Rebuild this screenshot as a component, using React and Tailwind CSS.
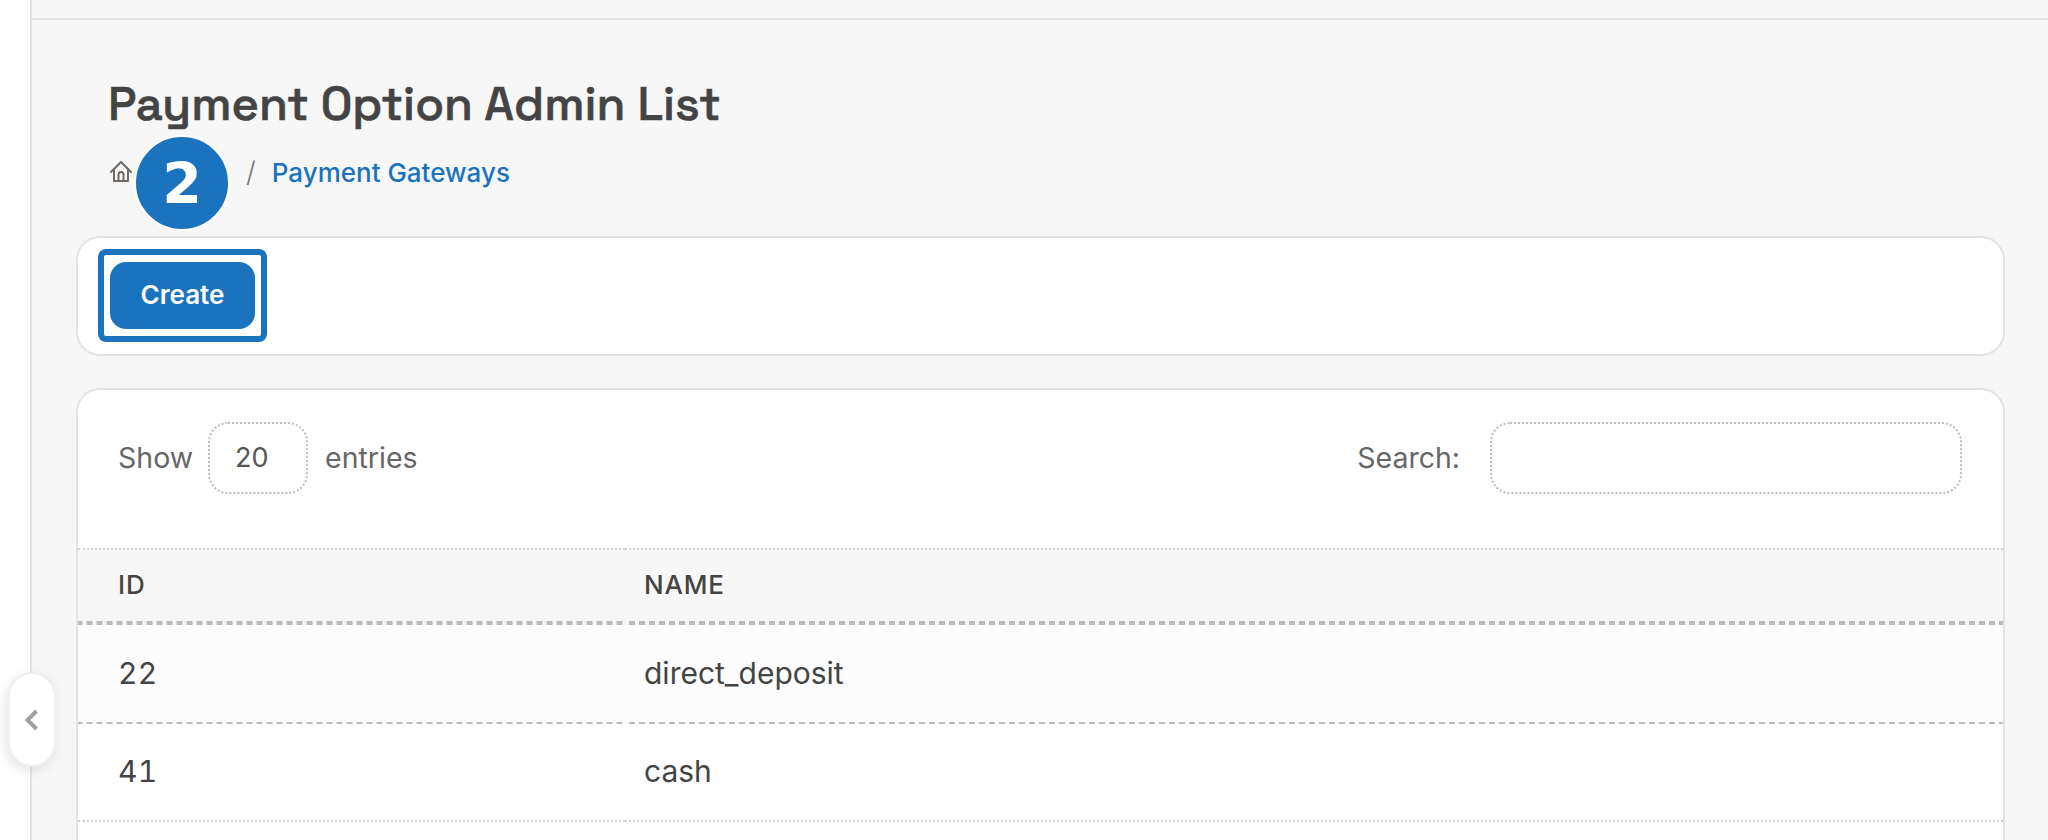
import { ChevronLeft } from "lucide-react";

const dashes = "bg-[linear-gradient(to_right,#bbbbbb_6px,transparent_6px)] bg-bottom bg-repeat-x";

const rows = [
  { id: 22, name: "direct_deposit", bg: "bg-[#fcfcfc]", h: "h-[99px]", line: `${dashes} bg-[length:10px_2px]` },
  { id: 41, name: "cash", bg: "bg-white", h: "h-[98px]", line: "border-b-2 border-dotted border-[#d0d0d0]" },
];

function HomeIcon() {
  return (
    <svg viewBox="0 0 24 24" className="ml-[1px] w-[24px] h-[24px] text-[#6f6a66]" fill="none" stroke="currentColor" strokeWidth="2" strokeLinejoin="round" strokeLinecap="round">
      <path d="M2 12 12 2l10 10" />
      <path d="M5 10v11h14V10" />
      <path d="M9.5 21v-6.5a2.5 2.5 0 0 1 5 0V21" />
    </svg>
  );
}

export default function App() {
  return (
    <div className="relative flex h-[840px] overflow-hidden bg-white font-['Inter',sans-serif] text-[#444]">
      <div className="w-[30px] shrink-0 border-r-2 border-[#e2e2e2] box-content" />

      <main className="flex-1 bg-[#f7f7f7]">
        <div className="h-[20px] border-b-2 border-[#e2e2e2]" />

        <div className="pl-[44px] pr-[43px]">
          <div className="pl-[32px] pt-[54px]">
            <h1 className="font-['Space_Grotesk','DejaVu_Sans',sans-serif] text-[47px] leading-[60px] font-medium text-[#444] [-webkit-text-stroke:0.7px_#444]">
              Payment Option Admin List
            </h1>
            <div className="relative mt-[22px] flex items-center h-[32px]">
              <HomeIcon />
              <span className="ml-[113px] text-[28px] text-[#777] font-light">/</span>
              <a className="ml-[16px] text-[26px] text-[#1c73bd] font-medium">Payment Gateways</a>
              <div className="absolute left-[26px] top-[-21px] flex items-center justify-center w-[96px] h-[96px] pt-[2px] rounded-full bg-[#1c73bd] border-2 border-white text-white font-['DejaVu_Sans',sans-serif] font-bold text-[57px] leading-none">
                2
              </div>
            </div>
          </div>

          <section className="mt-[48px] h-[120px] rounded-[24px] border-2 border-[#e3e3e3] bg-white pl-[20px] pt-[11px]">
            <div className="w-[169px] h-[93px] rounded-[8px] border-[6px] border-[#1c73bd] bg-white pl-[6px] pt-[7px]">
              <button className="w-[145px] h-[67px] pb-[2px] rounded-[16px] bg-[#1c73bd] text-white text-[26px] font-semibold">
                Create
              </button>
            </div>
          </section>

          <section className="mt-[32px] rounded-t-[24px] border-2 border-[#e3e3e3] bg-white h-[500px]">
            <div className="flex items-center justify-between h-[158px] pl-[40px] pr-[41px] pb-[23px] text-[28.5px] text-[#666]">
              <div className="flex items-center">
                <span className="pt-[2px]">Show</span>
                <div className="ml-[15px] w-[100px] h-[72px] pt-[2px] rounded-[20px] border-2 border-dotted border-[#bdbdbd] flex items-center pl-[25px] text-[27px] text-[#555]">
                  20
                </div>
                <span className="ml-[17px] pt-[2px]">entries</span>
              </div>
              <div className="flex items-center">
                <span className="pt-[2px]">Search:</span>
                <div className="ml-[30px] w-[472px] h-[72px] rounded-[20px] border-2 border-dotted border-[#bdbdbd]" />
              </div>
            </div>

            <table className="w-full border-separate border-spacing-0 text-[30px]">
              <thead>
                <tr className="bg-[#f7f7f7]">
                  <th className={`w-[547px] h-[77px] pl-[40px] pb-[6px] text-left text-[26px] font-[550] tracking-[0.8px] border-t-2 border-dotted border-t-[#d4d4d4] ${dashes} bg-[length:10px_4px]`}>ID</th>
                  <th className={`h-[77px] pl-[19px] pb-[6px] text-left text-[26px] font-[550] tracking-[0.8px] border-t-2 border-dotted border-t-[#d4d4d4] ${dashes} bg-[length:10px_4px]`}>NAME</th>
                </tr>
              </thead>
              <tbody>
                {rows.map((r) => (
                  <tr key={r.id} className={r.bg}>
                    <td className={`pl-[40px] pb-[2px] tabular-nums tracking-[0.4px] ${r.h} ${r.line}`}>{r.id}</td>
                    <td className={`pl-[19px] pb-[2px] ${r.h} ${r.line}`}>{r.name}</td>
                  </tr>
                ))}
              </tbody>
            </table>
          </section>
        </div>
      </main>

      <button className="absolute left-[8px] top-[672px] flex items-center justify-center w-[48px] h-[95px] rounded-full bg-white border-2 border-[#eeeeee] shadow-[-2px_4px_12px_rgba(0,0,0,0.1)]">
        <ChevronLeft className="w-[36px] h-[36px] shrink-0 text-[#a0a0a0]" strokeWidth={2.6} strokeLinecap="butt" strokeLinejoin="miter" />
      </button>
    </div>
  );
}
